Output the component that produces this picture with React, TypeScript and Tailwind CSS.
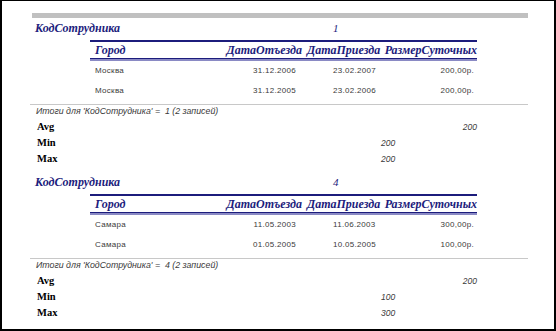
const serif = "font-['Liberation_Serif','Times_New_Roman',serif]";
const sans = "font-['Liberation_Sans',Arial,sans-serif]";

type Row = { city: string; out: string; back: string; sum: string };

type Group = {
  id: string;
  rows: Row[];
  avg: string;
  min: string;
  max: string;
};

const groups: Group[] = [
  {
    id: "1",
    rows: [
      { city: "Москва", out: "31.12.2006", back: "23.02.2007", sum: "200,00р." },
      { city: "Москва", out: "31.12.2005", back: "23.02.2006", sum: "200,00р." },
    ],
    avg: "200",
    min: "200",
    max: "200",
  },
  {
    id: "4",
    rows: [
      { city: "Самара", out: "11.05.2003", back: "11.06.2003", sum: "300,00р." },
      { city: "Самара", out: "01.05.2005", back: "10.05.2005", sum: "100,00р." },
    ],
    avg: "200",
    min: "100",
    max: "300",
  },
];

const GroupBlock = ({ g }: { g: Group }) => (
  <div className="flex flex-col">
    {/* group header */}
    <div className={`flex h-[20px] items-center ${serif} text-[#1c1c7c]`}>
      <span className="ml-[33px] w-[298px] text-[12px] font-bold italic">КодСотрудника</span>
      <span className="text-[11px] italic">{g.id}</span>
    </div>

    {/* detail table */}
    <div className="ml-[88px] mt-[2px] w-[387px]">
      <div className="border-t-2 border-[#1c1c7c]">
        <div className={`flex h-[16px] items-center whitespace-nowrap text-[12px] font-bold italic text-[#1c1c7c] ${serif}`}>
          <span className="w-[128px] pl-[5px]">Город</span>
          <span className="w-[84px] text-right">ДатаОтъезда</span>
          <span className="w-[5px]" />
          <span className="w-[73px]">ДатаПриезда</span>
          <span className="flex-1 text-right">РазмерСуточных</span>
        </div>
        <div className="h-px bg-[#1c1c7c]" />
        <div className="h-[2px] bg-[#8a8ac4]" />
      </div>
      {g.rows.map((r, i) => (
        <div
          key={i}
          className={`flex h-[20px] items-center whitespace-nowrap text-[8px] tracking-[0.3px] text-[#3a3a3a] ${sans}`}
        >
          <span className="w-[128px] pl-[5px]">{r.city}</span>
          <span className="w-[78px] text-right">{r.out}</span>
          <span className="w-[37px]" />
          <span className="w-[60px]">{r.back}</span>
          <span className="flex-1 pr-[3px] text-right">{r.sum}</span>
        </div>
      ))}
    </div>

    {/* summary */}
    <div className="ml-[28px] mt-[3px] w-[498px] border-t border-[#c8c8c8]">
      <div className={`flex h-[14px] items-center whitespace-pre pl-[6px] text-[8.8px] italic text-[#3a3a3a] ${sans}`}>
        Итоги для 'КодСотрудника' =  {g.id} (2 записей)
      </div>
      <div className="flex h-[16px] w-[447px] items-center">
        <span className={`pl-[7px] text-[10.5px] font-bold ${serif}`}>Avg</span>
        <span className={`ml-auto text-[8.5px] italic text-[#3a3a3a] ${sans}`}>{g.avg}</span>
      </div>
      <div className="flex h-[16px] items-center">
        <span className={`w-[351px] pl-[7px] text-[10.5px] font-bold ${serif}`}>Min</span>
        <span className={`text-[8.5px] italic text-[#3a3a3a] ${sans}`}>{g.min}</span>
      </div>
      <div className="flex h-[16px] items-center">
        <span className={`w-[351px] pl-[7px] text-[10.5px] font-bold ${serif}`}>Max</span>
        <span className={`text-[8.5px] italic text-[#3a3a3a] ${sans}`}>{g.max}</span>
      </div>
    </div>
  </div>
);

export default function App() {
  return (
    <div className="box-border h-[331px] w-[556px] overflow-hidden border-2 border-t border-black bg-white text-black">
      <div className="ml-[30px] mt-[12px] h-[5px] w-[496px] bg-[#c0c0c0]" />
      <div className="flex flex-col gap-[5px]">
        {groups.map((g) => (
          <GroupBlock key={g.id} g={g} />
        ))}
      </div>
    </div>
  );
}
